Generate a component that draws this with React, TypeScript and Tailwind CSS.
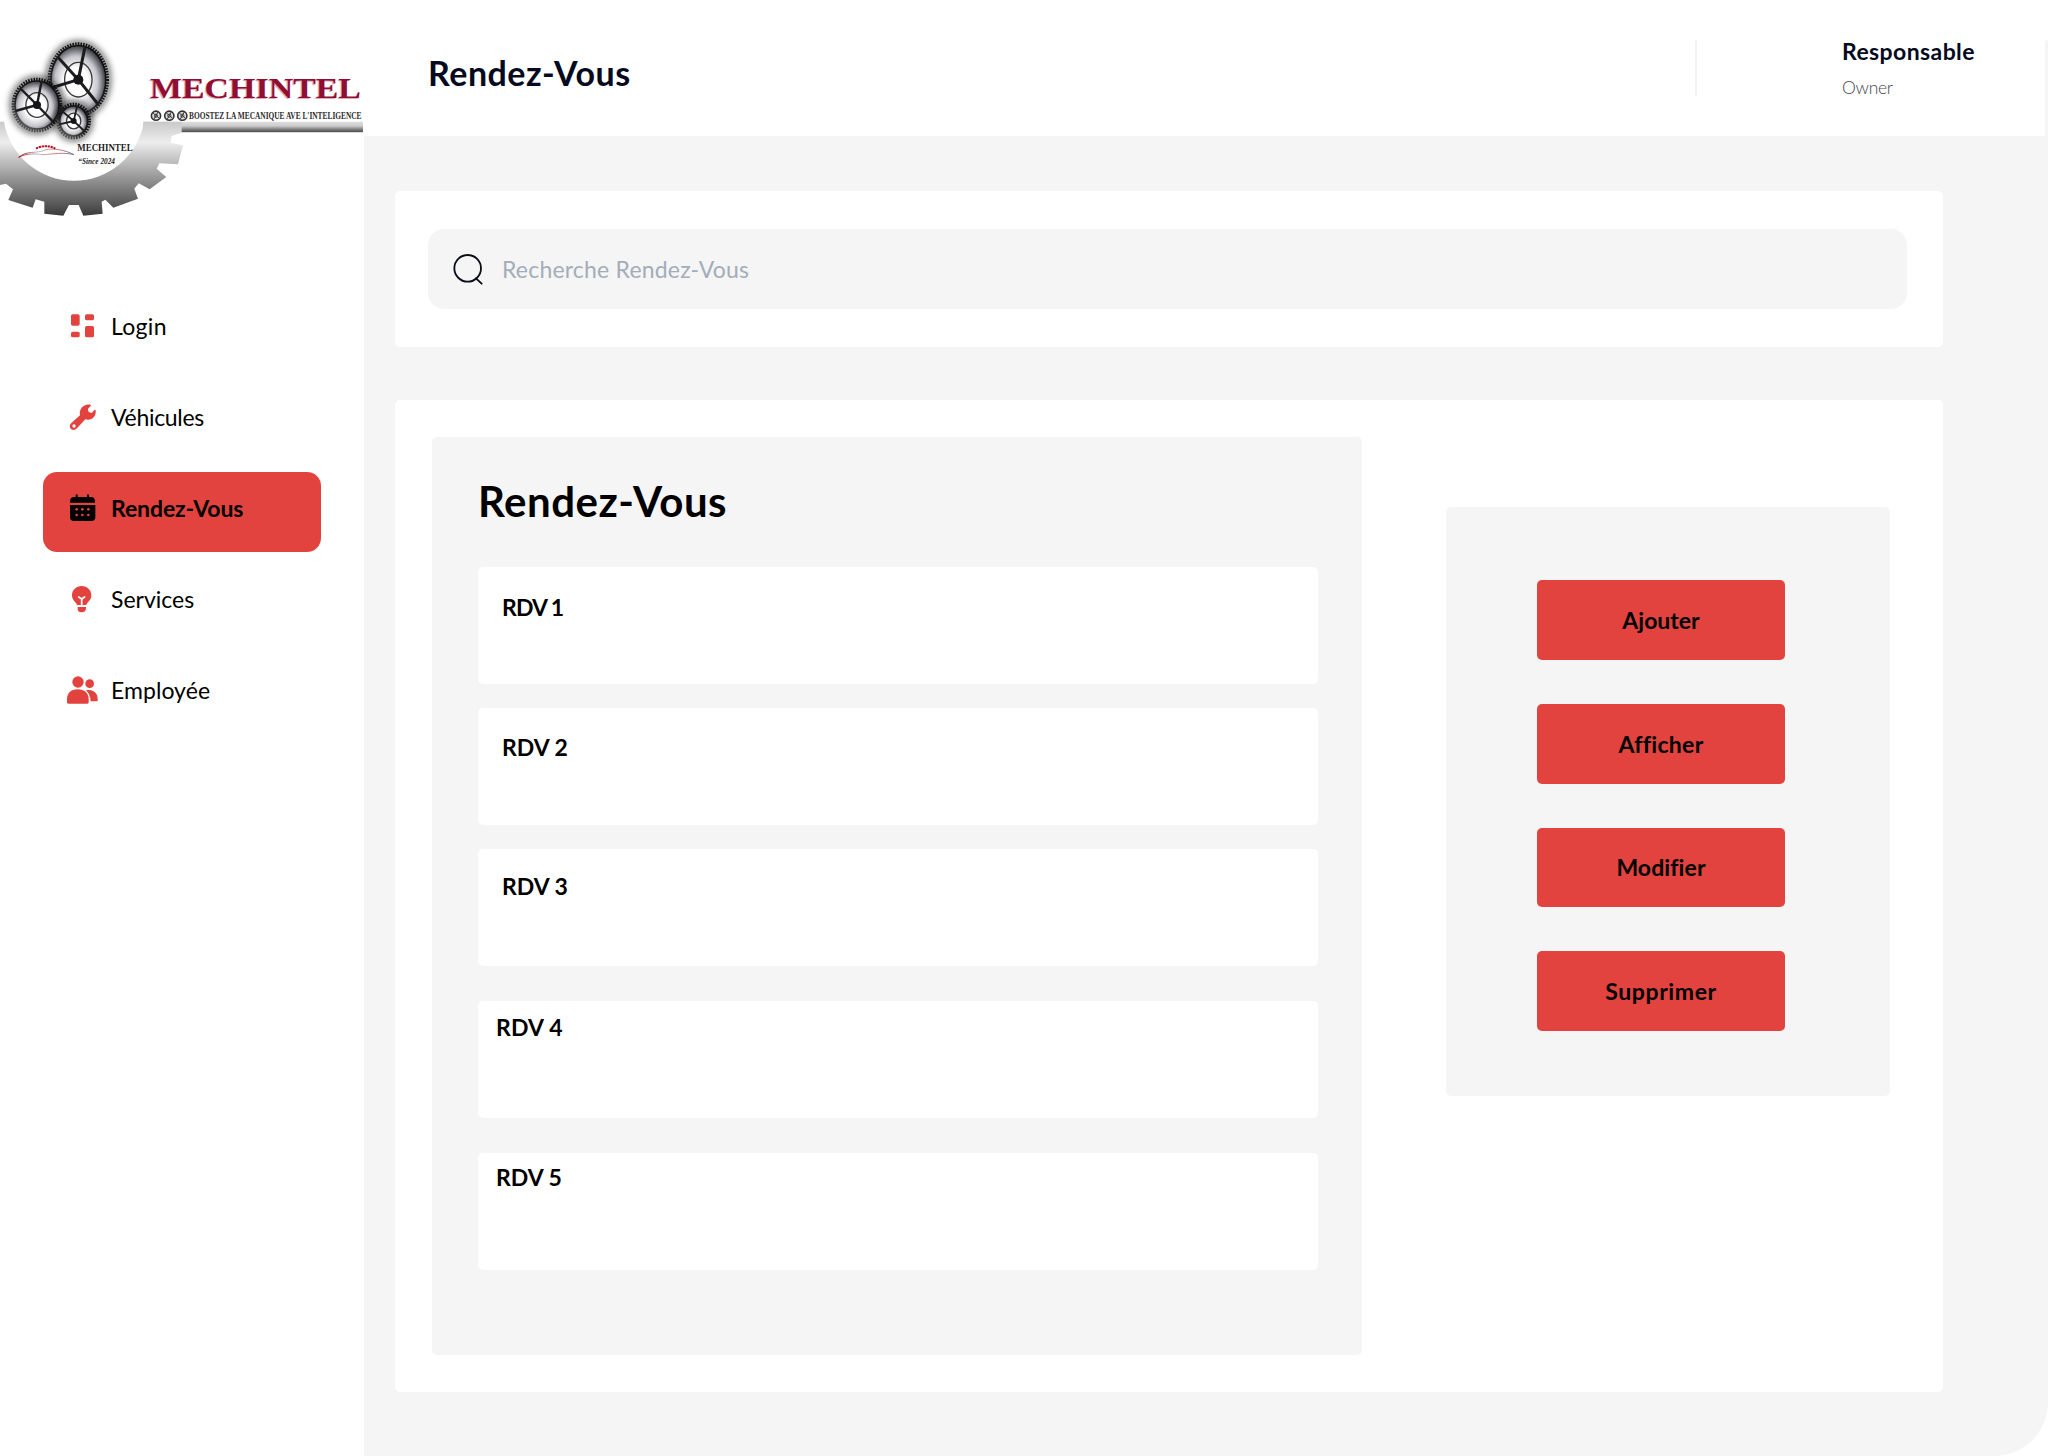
import type { ReactNode } from "react";

function Wheel({ cx, cy, rx, ry, hub, spokes }: { cx: number; cy: number; rx: number; ry: number; hub: number; spokes: number[][] }) {
  return (
    <g>
      <ellipse cx={cx} cy={cy} rx={rx + 2} ry={ry + 2} fill="none" stroke="#111" strokeWidth="22" opacity="0.65" filter="url(#soft)" />
      <ellipse cx={cx} cy={cy} rx={rx - 4} ry={ry - 4} fill="url(#wheel)" />
      <ellipse cx={cx} cy={cy} rx={rx - 2} ry={ry - 2} fill="none" stroke="url(#rim)" strokeWidth="5" />
      <ellipse cx={cx} cy={cy} rx={rx + 3} ry={ry + 3} fill="none" stroke="url(#rim)" strokeWidth="10" strokeDasharray="4.5 3.5" />
      <ellipse cx={cx} cy={cy} rx={rx * 0.49} ry={ry * 0.5} fill="none" stroke="#3a3a3c" strokeWidth="4" />
      {spokes.map(([x, y], i) => (
        <line key={i} x1={cx} y1={cy} x2={x} y2={y} stroke="#1d1d1f" strokeWidth={hub * 0.6} />
      ))}
      <circle cx={cx} cy={cy} r={hub} fill="#161618" />
    </g>
  );
}

function Logo() {
  return (
    <svg className="block h-[230px] w-[364px] overflow-visible" viewBox="0 0 364 230">
      <defs>
        <linearGradient id="steel" gradientUnits="userSpaceOnUse" x1="0" y1="275" x2="0" y2="557">
          <stop offset="0" stopColor="#c9c9c9" />
          <stop offset="0.22" stopColor="#ededed" />
          <stop offset="0.55" stopColor="#a2a2a2" />
          <stop offset="1" stopColor="#3c3c3c" />
        </linearGradient>
        <linearGradient id="bar" x1="0" y1="0" x2="0" y2="1">
          <stop offset="0" stopColor="#dedede" />
          <stop offset="0.4" stopColor="#cccccc" />
          <stop offset="0.7" stopColor="#858585" />
          <stop offset="1" stopColor="#484848" />
        </linearGradient>
        <linearGradient id="rim" x1="0.8" y1="0" x2="0.2" y2="1">
          <stop offset="0" stopColor="#0c0c0e" />
          <stop offset="0.6" stopColor="#1c1c1f" />
          <stop offset="1" stopColor="#5a5a5e" />
        </linearGradient>
        <radialGradient id="wheel" cx="0.46" cy="0.55" r="0.56">
          <stop offset="0.4" stopColor="#fff" />
          <stop offset="0.72" stopColor="#c6c6cc" />
          <stop offset="1" stopColor="#3c3c44" />
        </radialGradient>
        <linearGradient id="swoosh">
          <stop offset="0" stopColor="#a81c2c" />
          <stop offset="0.35" stopColor="#b9bcc8" />
          <stop offset="0.65" stopColor="#d77a70" />
          <stop offset="1" stopColor="#6b7fa8" />
        </linearGradient>
        <filter id="soft" x="-40%" y="-40%" width="180%" height="180%">
          <feGaussianBlur stdDeviation="11" />
        </filter>
      </defs>
      <rect x="143" y="121.7" width="220" height="10.5" fill="url(#bar)" />
      <g transform="translate(0 30) scale(0.33333)">
        <path
          fill="url(#steel)"
          d="M0 275H12A213 213 0 0 0 432 275H545V308L515 318L512 338L549 346L534 403L478 400L470 416L499 441L449 478L416 460L403 476L414 506L340 533L316 509L305 515L308 551L250 557L236 525H207L190 557L133 551V515L107 508L98 533L25 510L39 478L18 461L0 465Z"
        />
        <Wheel cx={235} cy={149} rx={84} ry={104} hub={15} spokes={[[255, 50], [174, 82], [296, 225], [152, 174]]} />
        <Wheel cx={111} cy={225} rx={68} ry={74} hub={12} spokes={[[125, 153], [60, 174], [46, 243], [164, 280]]} />
        <Wheel cx={221} cy={273} rx={44} ry={47} hub={9} spokes={[[232, 226], [186, 243], [178, 283], [256, 306]]} />
        <path d="M56 382C80 360 110 372 135 360C160 352 200 362 222 374C190 366 160 372 132 374C108 372 82 368 56 382Z" fill="none" stroke="url(#swoosh)" strokeWidth="3" />
        <path d="M108 356C124 346 150 346 166 356" fill="none" stroke="#b01428" strokeWidth="6" strokeDasharray="7 2" />
        <text x="232" y="364" fontFamily="'Liberation Serif', serif" fontWeight="700" fontSize="28" fill="#222" textLength="166" lengthAdjust="spacingAndGlyphs">MECHINTEL</text>
        <text x="235" y="402" fontFamily="'Liberation Serif', serif" fontStyle="italic" fontWeight="700" fontSize="24" fill="#1c1c1c" textLength="110" lengthAdjust="spacingAndGlyphs">“Since 2024</text>
      </g>
      <text x="150" y="98" fontFamily="'Liberation Serif', serif" fontWeight="700" fontSize="29" fill="#8f0f33" textLength="211" lengthAdjust="spacingAndGlyphs" className="[text-shadow:-1px_1px_0_#e3a9b8]">MECHINTEL</text>
      {[156, 169.3, 182.3].map((x) => (
        <g key={x} fill="none" stroke="#333">
          <circle cx={x} cy="115.7" r="4.6" strokeWidth="1.6" fill="#ddd" />
          <path d={`M${x - 3} 113l6 5M${x + 2} 112l-4 7`} strokeWidth="1" />
          <circle cx={x} cy="115.7" r="1.6" strokeWidth="0.8" />
        </g>
      ))}
      <text x="189" y="119.3" fontFamily="'Liberation Serif', serif" fontWeight="700" fontSize="9.6" fill="#2c2c2c" textLength="172.5" lengthAdjust="spacingAndGlyphs">BOOSTEZ LA MECANIQUE AVE L'INTELIGENCE</text>
    </svg>
  );
}

const iconClass = "h-8 w-8";

const DashboardIcon = (
  <svg className={iconClass} viewBox="0 0 96 96" fill="#e2433f">
    <rect x="15" y="13" width="26" height="34" rx="5" />
    <rect x="57" y="13" width="27" height="18" rx="5" />
    <rect x="15" y="65" width="26" height="17" rx="5" />
    <rect x="57" y="48" width="27" height="34" rx="5" />
  </svg>
);

const WrenchIcon = (
  <svg className={iconClass} viewBox="0 0 96 96" fill="#e2433f">
    <path d="M73 11Q77 12 74 15L66 23Q65 36 78 35L85 27Q89 24 89 29C91 46 77 60 58 55L33 82C20 95 3 79 16 66L42 43C38 24 53 7 73 11Z" />
    <circle cx="24" cy="75" r="5" fill="#fff" />
  </svg>
);

const CalendarIcon = (
  <svg className={iconClass} viewBox="0 0 96 96">
    <path d="M12 32V28Q12 15 25 15H29V10Q29 7 32 7T35 10V15H63V10Q63 7 66 7T69 10V15H74Q87 15 87 28V32Z" />
    <path d="M12 39H88V75Q88 87 76 87H24Q12 87 12 75Z" />
    <g fill="#e2433f">
      <circle cx="32" cy="52" r="4" />
      <circle cx="49" cy="52" r="4" />
      <circle cx="67" cy="52" r="4" />
      <circle cx="32" cy="69" r="4" />
      <circle cx="49" cy="69" r="4" />
      <circle cx="67" cy="69" r="4" />
    </g>
  </svg>
);

const BulbIcon = (
  <svg className={iconClass} viewBox="0 0 96 96" fill="#e2433f">
    <path d="M47 9C31 9 18 21 18 37C18 49 25 54 30 60C32 63 32 66 35 66H59C62 66 62 63 64 60C69 54 76 49 76 37C76 21 63 9 47 9Z" />
    <path d="M35 72H60V75Q60 88 47 88T35 75Z" />
    <path d="M38 42L47 48L56 42M47 48V66" fill="none" stroke="#fff" strokeWidth="5" strokeLinecap="round" />
  </svg>
);

const PeopleIcon = (
  <svg className={iconClass} viewBox="0 0 96 96" fill="#e2433f">
    <circle cx="71" cy="29" r="13" />
    <path d="M60 49C80 44 95 56 95 74V79Q95 82 92 82H74Q73 62 60 49Z" />
    <circle cx="36" cy="24" r="20" fill="#fff" />
    <circle cx="36" cy="24" r="17" />
    <path d="M3 85V76C3 58 14 46 35 46S68 58 68 76V85Q68 89 64 89H7Q3 89 3 85Z" />
  </svg>
);

const nav: { label: string; icon: ReactNode; spacing: string; active?: boolean }[] = [
  { label: "Login", icon: DashboardIcon, spacing: "tracking-[0.3px]" },
  { label: "Véhicules", icon: WrenchIcon, spacing: "tracking-[-0.3px]" },
  { label: "Rendez-Vous", icon: CalendarIcon, spacing: "tracking-[-0.1px]", active: true },
  { label: "Services", icon: BulbIcon, spacing: "tracking-[0px]" },
  { label: "Employée", icon: PeopleIcon, spacing: "tracking-[0.05px]" },
];

const appointments = [
  { label: "RDV 1", box: "pl-6 pt-6 tracking-[-0.9px]" },
  { label: "RDV 2", box: "mt-6 pl-6 pt-[23px]" },
  { label: "RDV 3", box: "mt-6 pl-6 pt-[21px]" },
  { label: "RDV 4", box: "mt-[35px] pl-[18px] pt-[10px] tracking-[0.2px]" },
  { label: "RDV 5", box: "mt-[35px] pl-[18px] pt-2" },
];

const actions = [
  { label: "Ajouter", spacing: "tracking-[0px]" },
  { label: "Afficher", spacing: "tracking-[0.3px]" },
  { label: "Modifier", spacing: "tracking-[0.1px]" },
  { label: "Supprimer", spacing: "tracking-[0.6px]" },
];

export default function App() {
  return (
    <div className="flex h-[1456px] w-[2048px] overflow-hidden bg-white font-['Lato','Open_Sans',sans-serif] text-black">
      <aside className="flex w-[364px] shrink-0 flex-col">
        <Logo />
        <nav className="mt-[60px] flex flex-col gap-[11px] pl-[43px]">
          {nav.map((item) => (
            <a
              key={item.label}
              className={`flex h-20 w-[278px] items-center gap-[13px] rounded-[14px] pb-[9px] pl-[23px] text-[23px] leading-8 ${item.active ? "bg-[#e2433f] font-bold" : ""}`}
            >
              {item.icon}
              <span className={item.spacing}>{item.label}</span>
            </a>
          ))}
        </nav>
      </aside>

      <div className="flex grow flex-col rounded-br-[54px] bg-[#f5f5f5]">
        <div className="flex h-[136px] shrink-0 bg-white">
          <header className="flex grow pl-[64px]">
            <h1 className="mt-[53px] text-[34px] leading-10 font-bold tracking-[0.5px] text-[#050a1e]">Rendez-Vous</h1>
            <div className="mt-10 mr-[145px] ml-auto h-14 w-[2px] bg-[#f4f4f4]" />
            <div className="w-[203px] pt-[35px]">
              <p className="text-[23px] leading-8 font-bold tracking-[0.4px] text-[#050a1e]">Responsable</p>
              <p className="mt-[5px] text-[17.5px] leading-8 font-light tracking-[-0.3px] text-[#45464f]">Owner</p>
            </div>
          </header>
          <div className="mt-10 w-[3px] rounded-tr-full bg-[#f5f5f5]" />
        </div>

        <main className="flex flex-col pl-[31px]">
          <section className="mt-[55px] h-[156px] w-[1548px] rounded-[5px] bg-white px-[33px] pt-[38px]">
            <div className="flex h-20 w-[1479px] items-center rounded-2xl bg-[#f5f5f5] pl-6">
              <svg className="h-8 w-8" viewBox="0 0 96 96" fill="none" stroke="#0b0d17" strokeWidth="5.5" strokeLinecap="round">
                <circle cx="47" cy="46" r="40" />
                <path d="M72 76L89 92" />
              </svg>
              <span className="pb-px pl-[18px] text-[23px] leading-8 tracking-[0.2px] text-[#a3adb9]">Recherche Rendez-Vous</span>
            </div>
          </section>

          <section className="mt-[53px] flex h-[992px] w-[1548px] rounded-[5px] bg-white pt-[37px] pl-[37px]">
            <div className="h-[918px] w-[930px] rounded-[5px] bg-[#f5f5f5] pt-[39px] pl-[46px]">
              <h2 className="text-[42px] leading-[50px] font-bold tracking-[0.5px]">Rendez-Vous</h2>
              <ul className="mt-[41px]">
                {appointments.map((a) => (
                  <li key={a.label} className={`h-[117px] w-[840px] rounded-[5px] bg-white text-[23px] leading-8 font-bold ${a.box}`}>
                    {a.label}
                  </li>
                ))}
              </ul>
            </div>
            <div className="mt-[70px] ml-[84px] flex h-[589px] w-[444px] flex-col gap-11 rounded-[5px] bg-[#f5f5f5] pt-[73px] pl-[91px]">
              {actions.map((a) => (
                <button key={a.label} className={`h-[79.75px] w-[248px] rounded-[5px] bg-[#e2433f] text-[23px] leading-8 font-bold ${a.spacing}`}>
                  {a.label}
                </button>
              ))}
            </div>
          </section>
        </main>
      </div>
    </div>
  );
}
